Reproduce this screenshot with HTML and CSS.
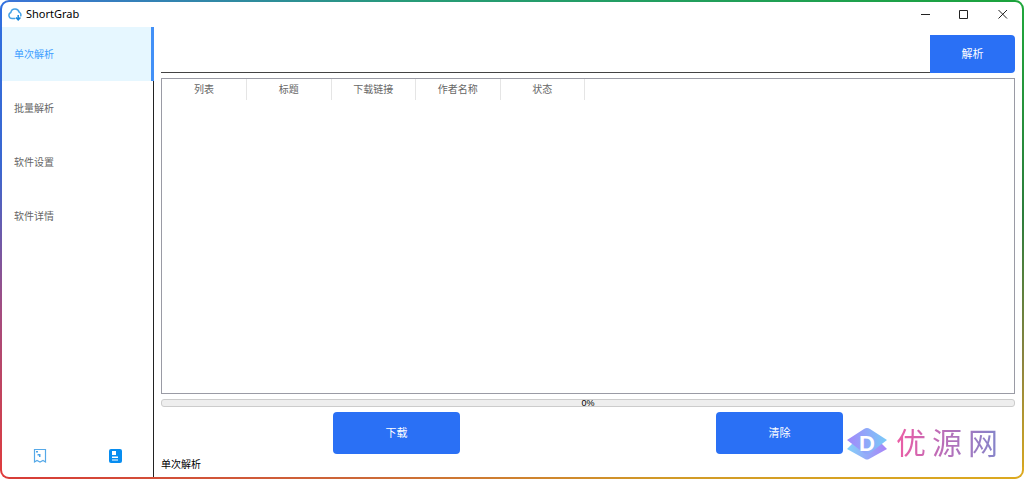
FILE: index.html
```html
<!DOCTYPE html>
<html lang="zh-CN">
<head>
<meta charset="utf-8">
<title>ShortGrab</title>
<link rel="stylesheet" href="styles.css">
</head>
<body>
<div class="frame">
<div class="window">
  <header class="titlebar">
    <svg class="app-icon" viewBox="0 0 14 14" aria-hidden="true">
      <path d="M6.800 11.600H4.200A3.200 3.200 0 0 1 2.800 5.500 4.300 4.300 0 0 1 11.200 5.200 3.200 3.200 0 0 1 12.800 8.800" fill="none" stroke="#45a2e6" stroke-width="1.500" stroke-linecap="round"/>
      <path d="M10.200 8v4.500M8 10.500l2.200 2.300 2.200-2.300" fill="none" stroke="#1887dc" stroke-width="1.500"/>
    </svg>
    <h1 class="app-name">ShortGrab</h1>
    <div class="window-controls">
      <button class="window-button" aria-label="最小化"><svg viewBox="0 0 10 10"><path d="M1 5.500h9"/></svg></button>
      <button class="window-button" aria-label="最大化"><svg viewBox="0 0 10 10"><path d="M.5 1.500h8v8h-8z"/></svg></button>
      <button class="window-button" aria-label="关闭"><svg viewBox="0 0 10 10"><path d="M.5 1l8.500 8.500M9 1L.5 9.500"/></svg></button>
    </div>
  </header>
  <div class="body">
    <aside class="sidebar">
      <nav class="menu">
        <a class="menu-item active" href="#single">单次解析</a>
        <a class="menu-item" href="#batch">批量解析</a>
        <a class="menu-item" href="#settings">软件设置</a>
        <a class="menu-item" href="#about">软件详情</a>
      </nav>
      <div class="sidebar-tools">
        <button class="tool" aria-label="收藏"><svg viewBox="0 0 14 16"><path d="M1.500 1.500h11v12.500l-2.500-1.500-3 1.500-3-1.500-2.500 1.500z" fill="none" stroke="#56a9e8" stroke-width="1.200"/><path d="M3 3h2v1.500H3zM4.500 6h3v3h-1.500v-1.500h-1.500z" fill="#4ba3e7"/></svg></button>
        <button class="tool" aria-label="文档"><svg viewBox="0 0 14 16"><rect x="1" y="1" width="13" height="14" rx="2" fill="#078df0"/><path d="M4 3h4v4H4zM4 8.500h6v1.500H4zM4 11.500h6v1H4z" fill="#fff"/></svg></button>
      </div>
    </aside>
    <main class="content">
      <form class="search" onsubmit="return false">
        <input class="url" type="text" aria-label="链接">
        <button class="button parse">解析</button>
      </form>
      <div class="list">
        <table class="tasks">
          <thead><tr><th>列表</th><th>标题</th><th>下载链接</th><th>作者名称</th><th>状态</th></tr></thead>
        </table>
      </div>
      <div class="progress" role="progressbar" aria-valuenow="0" aria-valuemin="0" aria-valuemax="100">0%</div>
      <div class="actions">
        <div class="action"><button class="button">下载</button></div>
        <div class="action"><button class="button">清除</button></div>
      </div>
      <p class="status">单次解析</p>
    </main>
  </div>
</div>
<div class="brand">
  <svg class="brand-mark" viewBox="0 0 42 34" aria-hidden="true">
    <defs>
      <linearGradient id="top"><stop offset="0" stop-color="#a487fa"/><stop offset="1" stop-color="#79cbf8"/></linearGradient>
      <linearGradient id="base"><stop offset="0" stop-color="#83d2f8"/><stop offset="1" stop-color="#a982f8"/></linearGradient>
    </defs>
    <path d="M1 22 6 17 36 17 41 22 23 32Q21 33 19 32z" fill="url(#base)"/>
    <path d="M1 13 18 2Q21 0 24 2L41 13 24 26Q21 28 18 26z" fill="url(#top)"/>
    <text class="brand-letter" x="21" y="24" text-anchor="middle">D</text>
  </svg>
  <div class="brand-name"><span>优</span><span>源</span><span>网</span></div>
</div>
</div>
</body>
</html>
```
FILE: styles.css
```css
* { box-sizing: border-box; }
body {
  margin: 0;
  font: 10px/16px "Liberation Sans", "Noto Sans CJK SC", sans-serif;
  color: #000;
}
button { font: inherit; border: 0; padding: 0; background: none; }
.frame {
  position: relative;
  display: flex;
  height: 100vh;
  padding: 2px;
  border-radius: 9px;
  background:
    linear-gradient(90deg, #3b73d9, #279b78 40%, #1ba33c) top / 100% 2px no-repeat,
    linear-gradient(90deg, #d83b37, #cc6738 35%, #d19a27 65%, #dca91f) bottom / 100% 2px no-repeat,
    linear-gradient(90deg, #e03b3b 50%, #dca91f 50%) bottom / 100% 12px no-repeat,
    linear-gradient(#2f6fe0, #3b67d0 35%, #a44c80 65%, #e03b3b) left / 50% 100% no-repeat,
    linear-gradient(#1fa83c, #2d7d3c 45%, #8b8440 75%, #dca91f) right / 50% 100% no-repeat;
}
.window {
  flex: 1;
  display: flex;
  flex-direction: column;
  min-width: 0;
  background: #fff;
  border-radius: 7px;
  overflow: hidden;
}
.titlebar { display: flex; align-items: center; height: 25px; padding: 0 0 2px 6px; }
.app-icon { width: 14px; height: 14px; }
.app-name {
  flex: 1;
  margin: 0 0 0 4px;
  font: 11px/16px "Noto Sans", sans-serif;
}
.window-controls { display: flex; }
.window-button { width: 39px; height: 23px; display: grid; place-items: center; }
.window-button svg { width: 10px; height: 10px; fill: none; stroke: #222; }
.body { flex: 1; display: flex; min-height: 0; }
.sidebar {
  width: 152px;
  display: flex;
  flex-direction: column;
  justify-content: space-between;
  border-right: 1px solid #222;
}
.menu { display: flex; flex-direction: column; margin-right: -1px; }
.menu-item {
  display: flex;
  align-items: center;
  height: 54px;
  padding: 2px 0 0 12px;
  color: #666;
  text-decoration: none;
}
.menu-item.active { color: #409eff; background: #e6f7ff; border-right: 3px solid #4290f7; }
.sidebar-tools { display: flex; padding-bottom: 13px; }
.tool { flex: 1; display: grid; place-items: center; }
.tool svg { width: 14px; height: 16px; }
.content {
  flex: 1;
  min-width: 0;
  display: flex;
  flex-direction: column;
  padding: 8px 7px 4px;
}
.search { display: flex; height: 38px; }
.url {
  flex: 1;
  min-width: 0;
  border: 0;
  border-bottom: 1px solid #444;
  outline: 0;
  font: inherit;
}
.button {
  width: 127px;
  height: 42px;
  border-radius: 4px;
  background: #2a70f5;
  color: #fff;
  font-size: 11px;
}
.button.parse { width: 85px; height: 38px; border-radius: 0 4px 4px 0; }
.list { flex: 1; margin-top: 5px; border: 1px solid #9a9ba5; }
.tasks { border-collapse: collapse; table-layout: fixed; width: 423px; }
.tasks th {
  height: 21px;
  padding: 0;
  border-right: 1px solid #e5e5e5;
  color: #666;
  font-weight: 400;
}
.progress {
  height: 8px;
  margin: 5px 0;
  border: 1px solid #ccc;
  border-radius: 3px;
  background: #eee;
  font-size: 9px;
  line-height: 6px;
  text-align: center;
}
.actions { display: flex; padding-left: 88px; }
.action { flex: 1; padding-left: 84px; }
.status { margin: 3px 0 0; }
.brand {
  position: absolute;
  right: 26px;
  bottom: 18px;
  display: flex;
  align-items: flex-start;
  gap: 8px;
}
.brand-mark { width: 42px; height: 34px; }
.brand-letter { font: bold 22px "Liberation Sans", sans-serif; fill: #fff; }
.brand-name {
  display: flex;
  gap: 6px;
  padding-bottom: 6px;
  font: 30px/28px "Noto Sans CJK SC", sans-serif;
  color: transparent;
  background: linear-gradient(90deg, #ed5da5, #b66fba 50%, #8585ca);
  background-clip: text;
}
```
